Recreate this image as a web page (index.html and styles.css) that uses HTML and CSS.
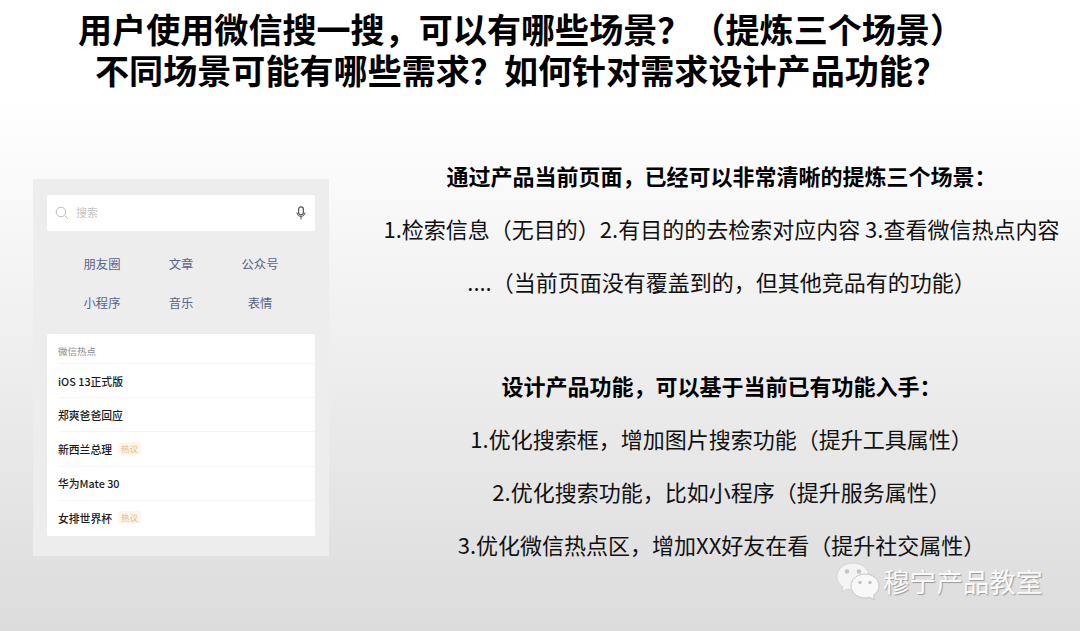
FILE: index.html
```html
<!DOCTYPE html>
<html lang="zh">
<head>
<meta charset="utf-8">
<title>微信搜一搜</title>
<link rel="stylesheet" href="styles.css">
</head>
<body>
<main class="slide">
  <header class="title">
    <h1>用户使用微信搜一搜&#xFF0C;可以有哪些场景&#xFF1F;&#xFF08;提炼三个场景&#xFF09;</h1>
    <h1>不同场景可能有哪些需求&#xFF1F;如何针对需求设计产品功能&#xFF1F;</h1>
  </header>
  <section class="content">
    <div class="phone">
      <div class="search">
        <svg class="search-icon" viewBox="0 0 14 14" width="14" height="14"><circle cx="6" cy="6" r="4.8" fill="none" stroke="#bdbdbd" stroke-width="1"/><path d="M9.6 9.6L12.6 12.6" stroke="#bdbdbd" stroke-width="1"/></svg>
        <span class="placeholder">搜索</span>
        <svg class="mic" viewBox="0 0 10 14" width="10" height="14"><rect x="2.6" y="0.8" width="4.8" height="8" rx="2.4" fill="none" stroke="#555" stroke-width="1.2"/><path d="M1 6.4C1 9 2.8 10.4 5 10.4S9 9 9 6.4M5 10.4V13.4" fill="none" stroke="#555" stroke-width="1"/></svg>
      </div>
      <nav class="cats">
        <span>朋友圈</span><span>文章</span><span>公众号</span>
        <span>小程序</span><span>音乐</span><span>表情</span>
      </nav>
      <div class="hot">
        <div class="hot-head">微信热点</div>
        <div class="hot-row">iOS 13正式版</div>
        <div class="hot-row">郑爽爸爸回应</div>
        <div class="hot-row">新西兰总理<span class="tag">热议</span></div>
        <div class="hot-row">华为Mate 30</div>
        <div class="hot-row">女排世界杯<span class="tag">热议</span></div>
      </div>
    </div>
    <div class="notes">
      <p class="strong">通过产品当前页面&#xFF0C;已经可以非常清晰的提炼三个场景&#xFF1A;</p>
      <p>1.检索信息&#xFF08;无目的&#xFF09;2.有目的的去检索对应内容 3.查看微信热点内容</p>
      <p>....&#xFF08;当前页面没有覆盖到的&#xFF0C;但其他竞品有的功能&#xFF09;</p>
      <p class="strong spaced">设计产品功能&#xFF0C;可以基于当前已有功能入手&#xFF1A;</p>
      <p>1.优化搜索框&#xFF0C;增加图片搜索功能&#xFF08;提升工具属性&#xFF09;</p>
      <p>2.优化搜索功能&#xFF0C;比如小程序&#xFF08;提升服务属性&#xFF09;</p>
      <p>3.优化微信热点区&#xFF0C;增加XX好友在看&#xFF08;提升社交属性&#xFF09;</p>
    </div>
  </section>
  <div class="mark">
    <svg viewBox="0 0 44 38" width="44" height="38"><path d="M17 1C8 1 1 7 1 14.500C1 19 3.500 22.500 7 25L5.500 30L11.500 27C13 27.500 15 27.800 17 27.800C25.500 27.800 33 21.500 33 14.500C33 7 26 1 17 1Z" fill="#f4f4f4" stroke="#c8c8c8" stroke-width=".6"/><circle cx="11" cy="9.500" r="2.200" fill="#c4c4c4"/><circle cx="23" cy="9.500" r="2.200" fill="#c4c4c4"/><path d="M29 12C21 12 15 17.500 15 24C15 30.500 21 36 29 36C30.500 36 32 35.800 33.500 35.300L38.500 37.500L37.500 33.200C40.800 31 43 27.700 43 24C43 17.500 37 12 29 12Z" fill="#f8f8f8" stroke="#bdbdbd" stroke-width=".8"/><circle cx="24" cy="20.500" r="1.800" fill="#c4c4c4"/><circle cx="34" cy="20.500" r="1.800" fill="#c4c4c4"/></svg>
    <span>穆宁产品教室</span>
  </div>
</main>
</body>
</html>
```
FILE: styles.css
```css
* { box-sizing: border-box; margin: 0; padding: 0; }
html, body { width: 1080px; height: 631px; overflow: hidden; }
body { font-family: "Noto Sans CJK SC", "Liberation Sans", sans-serif; color: #000; }
.slide {
  position: relative;
  width: 1080px;
  height: 631px;
  background: linear-gradient(180deg, #fff 0, #fff 100px, #dcdcdc 631px);
  padding-top: 8px;
}
.title { text-align: center; padding-right: 38px; }
.title h1 { font-size: 34.100px; line-height: 41px; font-weight: 700; white-space: nowrap; }
.content { display: flex; padding: 89px 0 0 33px; }
.phone {
  width: 296px;
  height: 377px;
  flex: none;
  background: #ededed;
  padding: 16px 14px 0;
}
.search {
  height: 36px;
  background: #fff;
  border-radius: 2px;
  display: flex;
  align-items: center;
  padding: 0 9px 0 8px;
}
.placeholder { font-size: 11px; line-height: 14px; color: #c4c4c4; margin: -2px 0 0 7px; flex: 1; }
.cats {
  display: grid;
  grid-template-columns: 110px 48px 110px;
  grid-auto-rows: 38.500px;
  justify-items: center;
  align-items: center;
  margin-top: 14px;
  font-size: 12.300px;
  color: #58628c;
}
.hot {
  margin-top: 12px;
  height: 202px;
  background: #fff;
  border-radius: 2px;
  padding-left: 11px;
  overflow: hidden;
}
.hot-head { height: 30px; line-height: 34px; font-size: 9.500px; color: #8c8c8c; border-bottom: 1px solid #f6f6f6; }
.hot-row {
  height: 34.200px;
  display: flex;
  align-items: center;
  font-size: 10.800px;
  font-weight: 500;
  color: #1a1a1a;
  border-bottom: 1px solid #f6f6f6;
}
.hot-row:last-child { border-bottom: 0; }
.tag {
  margin-left: 6px;
  padding: 0 3px;
  height: 13px;
  line-height: 13px;
  font-size: 8.500px;
  font-weight: 400;
  color: #e5b77a;
  background: #fdf6ec;
  border-radius: 2px;
}
.notes { flex: 1; margin-top: -30px; text-align: center; padding-left: 35px; padding-right: 1px; }
.notes p { font-size: 22px; line-height: 52.800px; white-space: nowrap; color: #111; }
.notes .strong { font-weight: 700; color: #000; }
.notes .spaced { margin-top: 52px; }
.mark {
  position: absolute;
  left: 836px;
  top: 562px;
  display: flex;
  align-items: center;
  gap: 3px;
  color: #fafafa;
  font-size: 26.600px;
  line-height: 38px;
  text-shadow: 1px 1px 1px #9a9a9a;
}
```
